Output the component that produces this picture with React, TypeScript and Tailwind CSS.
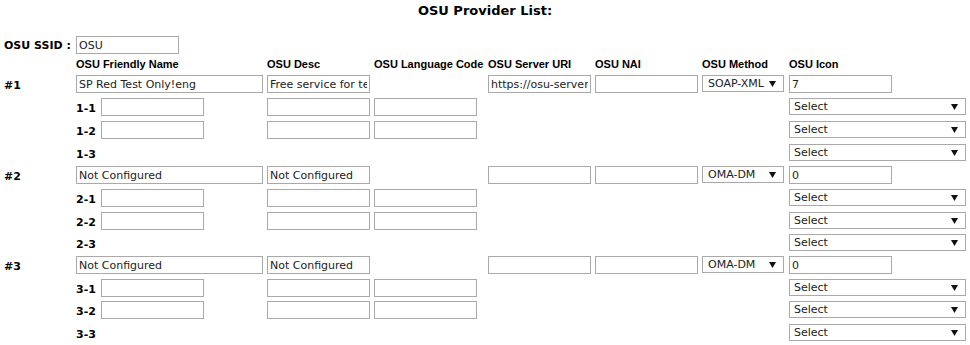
import React from "react";

const LABEL = "font-['DejaVu_Sans',Verdana,sans-serif] font-bold text-[11px] leading-[18px] pt-[2px] text-black";
const HEAD = "font-['Liberation_Sans',Arial,sans-serif] font-bold text-[11px] text-black whitespace-nowrap";
const FIELD =
  "h-[18px] border border-[#a9a9a9] bg-white px-[2px] pt-[1px] font-['DejaVu_Sans',Verdana,sans-serif] text-[11px] text-[#222] outline-none";

const GRID = "grid grid-cols-[72px_191px_107px_114px_107px_107px_87px_177px] items-start pl-[4px]";

function Field({ value = "", w = "w-[103px]" }: { value?: string; w?: string }) {
  return <input readOnly value={value} className={`${FIELD} ${w}`} />;
}

function Select({ value, wide }: { value: string; wide?: boolean }) {
  return (
    <div
      className={`relative flex h-[17px] items-center border border-[#a9a9a9] bg-white pt-[2px] font-['DejaVu_Sans',Verdana,sans-serif] text-[11px] text-[#222] ${
        wide ? "w-[177px] pl-[4px]" : "w-[82px] pl-[5px]"
      }`}
    >
      <span>{value}</span>
      <svg className="absolute right-[7px] top-[5px]" width="7" height="6" viewBox="0 0 7 6">
        <path d="M0 0 H7 L3.5 6 Z" fill="#111" />
      </svg>
    </div>
  );
}

type Provider = {
  n: number;
  name: string;
  desc: string;
  uri: string;
  method: string;
  icon: string;
};

const PROVIDERS: Provider[] = [
  { n: 1, name: "SP Red Test Only!eng", desc: "Free service for test purpose", uri: "https://osu-server.r2-testbed.wi-fi.org/", method: "SOAP-XML", icon: "7" },
  { n: 2, name: "Not Configured", desc: "Not Configured", uri: "", method: "OMA-DM", icon: "0" },
  { n: 3, name: "Not Configured", desc: "Not Configured", uri: "", method: "OMA-DM", icon: "0" },
];

// row pitch of the original table (input top to next input top)
const HEIGHTS = [
  [23, 23, 23, 22],
  [23, 23, 22, 22],
  [23, 22, 23, 21],
];

function ProviderBlock({ p, heights }: { p: Provider; heights: number[] }) {
  return (
    <>
      <div className={GRID} style={{ height: heights[0] }}>
        <span className={LABEL}>#{p.n}</span>
        <Field value={p.name} w="w-[187px]" />
        <Field value={p.desc} />
        <span />
        <Field value={p.uri} />
        <Field />
        <Select value={p.method} />
        <Field value={p.icon} />
      </div>
      {[1, 2, 3].map((i) => (
        <div key={i} className={GRID} style={{ height: heights[i] }}>
          <span />
          <div className="flex items-start">
            <span className={`${LABEL} w-[25px]`}>
              {p.n}-{i}
            </span>
            {i < 3 && <Field />}
          </div>
          {i < 3 ? <Field /> : <span />}
          {i < 3 ? <Field /> : <span />}
          <span />
          <span />
          <span />
          <Select value="Select" wide />
        </div>
      ))}
    </>
  );
}

export default function App() {
  return (
    <div className="h-[345px] w-[970px] overflow-hidden bg-white">
      <h1 className="pt-[3px] text-center font-['DejaVu_Sans',Verdana,sans-serif] text-[13px] font-bold leading-[16px] text-black">
        OSU Provider List:
      </h1>

      <div className="mt-[17px] flex h-[18px] items-start pl-[4px]">
        <span className={`${LABEL} !pt-[1px] w-[72px]`}>OSU SSID :</span>
        <Field value="OSU" />
      </div>

      <div className={`${GRID} h-[21px] !items-center`}>
        <span />
        <span className={HEAD}>OSU Friendly Name</span>
        <span className={HEAD}>OSU Desc</span>
        <span className={HEAD}>OSU Language Code</span>
        <span className={HEAD}>OSU Server URI</span>
        <span className={HEAD}>OSU NAI</span>
        <span className={HEAD}>OSU Method</span>
        <span className={HEAD}>OSU Icon</span>
      </div>

      {PROVIDERS.map((p, i) => (
        <ProviderBlock key={p.n} p={p} heights={HEIGHTS[i]} />
      ))}
    </div>
  );
}
